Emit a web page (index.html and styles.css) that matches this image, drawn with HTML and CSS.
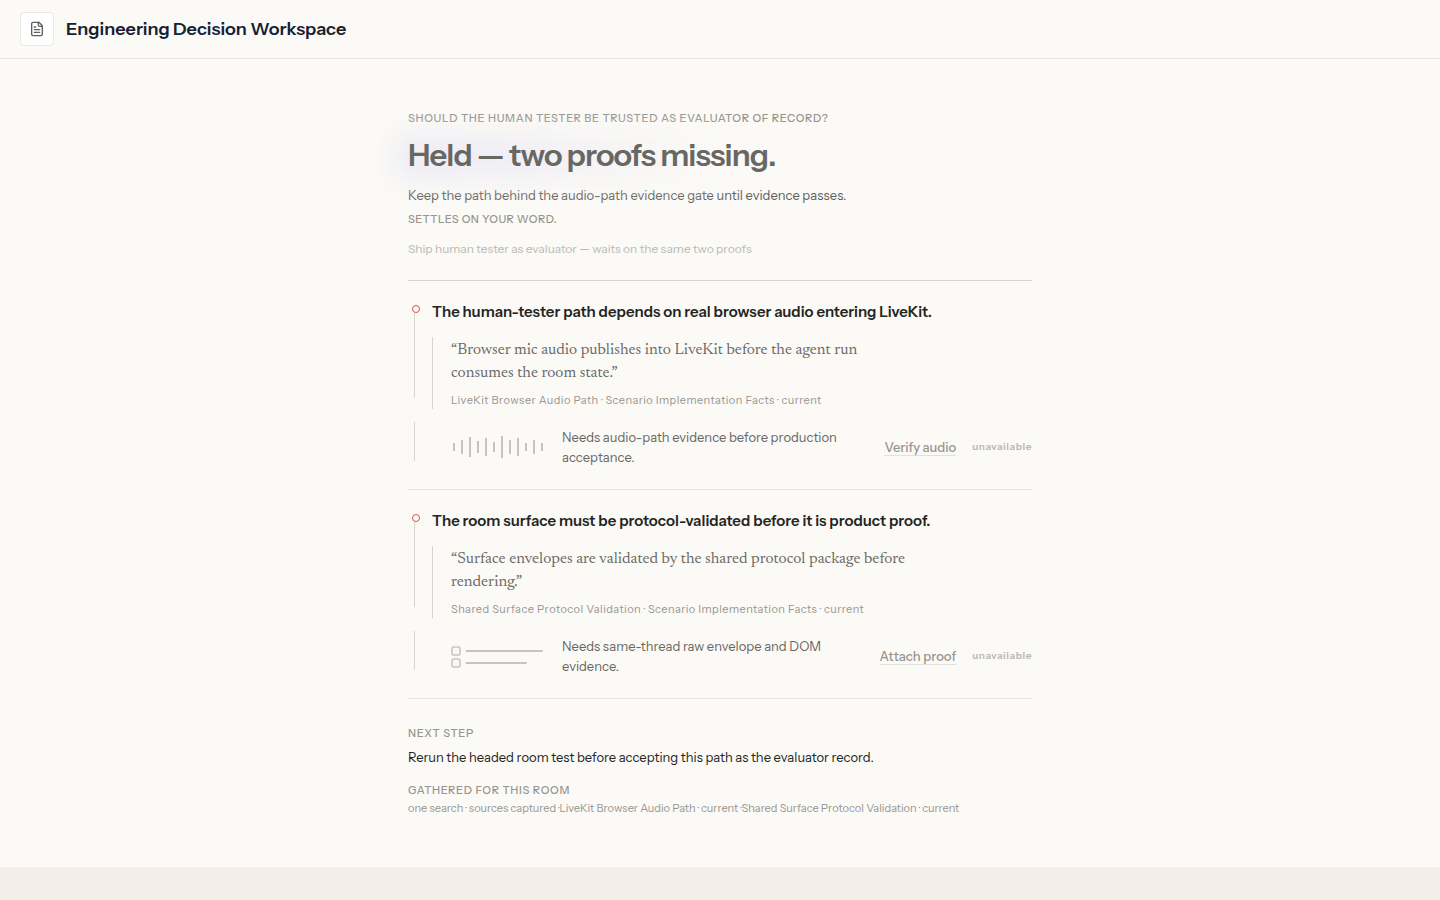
FILE: index.html
```html
<!DOCTYPE html>
<html lang="en">
<head>
<meta charset="utf-8">
<meta name="viewport" content="width=device-width, initial-scale=1">
<title>Engineering Decision Workspace</title>
<link rel="stylesheet" href="styles.css">
</head>
<body>
<div class="panel">
  <header class="topbar">
    <span class="topbar-icon">
      <svg width="16" height="16" viewBox="0 0 24 24" fill="none" stroke="currentColor" stroke-width="2" stroke-linecap="round" stroke-linejoin="round" aria-hidden="true"><path d="M15 2H6a2 2 0 0 0-2 2v16a2 2 0 0 0 2 2h12a2 2 0 0 0 2-2V7Z"/><path d="M14 2v4a2 2 0 0 0 2 2h4"/><path d="M10 9H8"/><path d="M16 13H8"/><path d="M16 17H8"/></svg>
    </span>
    <h1 class="topbar-title">Engineering Decision Workspace</h1>
  </header>
  <main class="content">
    <section class="verdict">
      <p class="label">Should the human tester be trusted as evaluator of record?</p>
      <h2 class="verdict-title">Held — two proofs missing.</h2>
      <p class="verdict-text">Keep the path behind the audio-path evidence gate until evidence passes.</p>
      <p class="label label-small">Settles on your word.</p>
      <p class="verdict-alt">Ship human tester as evaluator — waits on the same two proofs</p>
    </section>

    <article class="proof">
      <div class="rail"><span class="rail-dot"></span><span class="rail-line"></span></div>
      <div class="claim">
        <h3 class="claim-title">The human-tester path depends on real browser audio entering LiveKit.</h3>
        <figure class="quote">
          <blockquote class="quote-text">“Browser mic audio publishes into LiveKit before the agent run consumes the room state.”</blockquote>
          <figcaption class="quote-source">LiveKit Browser Audio Path · Scenario Implementation Facts · current</figcaption>
        </figure>
      </div>
      <div class="rail rail-next"><span class="rail-line"></span></div>
      <div class="need">
        <svg class="need-art" width="95" height="24" viewBox="0 0 95 24" fill="none" stroke="currentColor" stroke-width="2" aria-hidden="true"><path d="M3 8v8M11 5v14M19 2v20M27 6v12M35 3v18M43 7v10M51 1v22M59 5v14M67 3v18M75 8v8M83 5v14M91 8v8"/></svg>
        <p class="need-text">Needs audio-path evidence before production acceptance.</p>
        <button class="need-action" type="button" disabled>Verify audio</button>
        <span class="need-status">unavailable</span>
      </div>
    </article>

    <article class="proof">
      <div class="rail"><span class="rail-dot"></span><span class="rail-line"></span></div>
      <div class="claim">
        <h3 class="claim-title">The room surface must be protocol-validated before it is product proof.</h3>
        <figure class="quote">
          <blockquote class="quote-text">“Surface envelopes are validated by the shared protocol package before rendering.”</blockquote>
          <figcaption class="quote-source">Shared Surface Protocol Validation · Scenario Implementation Facts · current</figcaption>
        </figure>
      </div>
      <div class="rail rail-next"><span class="rail-line"></span></div>
      <div class="need">
        <svg class="need-art" width="95" height="24" viewBox="0 0 95 24" fill="none" stroke="currentColor" stroke-linecap="round" aria-hidden="true"><path stroke-width="2" d="M15.500 7H91M15.500 19H75"/><g stroke-width="1.500"><rect x="1" y="3" width="8" height="8" rx="1.500"/><rect x="1" y="15" width="8" height="8" rx="1.500"/></g></svg>
        <p class="need-text">Needs same-thread raw envelope and DOM evidence.</p>
        <button class="need-action" type="button" disabled>Attach proof</button>
        <span class="need-status">unavailable</span>
      </div>
    </article>

    <section class="closing">
      <h4 class="label">Next step</h4>
      <p class="next-text">Rerun the headed room test before accepting this path as the evaluator record.</p>
      <h4 class="label">Gathered for this room</h4>
      <p class="sources"><span>one search · sources captured ·</span><span>LiveKit Browser Audio Path · current ·</span><span>Shared Surface Protocol Validation · current</span></p>
    </section>
  </main>
</div>
</body>
</html>
```
FILE: styles.css
```css
* { box-sizing: border-box; }

body {
  margin: 0;
  min-height: 100vh;
  background: #f3eee8;
  color: #242421;
  font-family: "Instrument Sans", Inter, "Liberation Sans", sans-serif;
  font-size: 13px;
  line-height: 20px;
}

h1, h2, h3, h4, p, figure, blockquote { margin: 0; }

.panel { background: #fbfaf6; }

.topbar {
  display: flex;
  align-items: center;
  gap: 12px;
  padding: 12px 20px;
  border-bottom: 1px solid #e7e6e3;
}

.topbar-icon {
  display: grid;
  place-items: center;
  width: 34px;
  height: 34px;
  background: #fff;
  border: 1px solid #e9e8e5;
  border-radius: 4px;
  color: #60605c;
}

.topbar-title {
  color: #172033;
  font-size: 18px;
  font-weight: 600;
  line-height: 24px;
}

.content {
  max-width: 624px;
  margin: 0 auto;
  padding: 51px 0;
}

.label {
  color: #969590;
  font-size: 11px;
  font-weight: 500;
  line-height: 16px;
  letter-spacing: 0.06em;
  text-transform: uppercase;
}

.label-small { letter-spacing: 0.04em; }

.verdict {
  padding-bottom: 21px;
  border-bottom: 1px solid #d6d5d1;
}

.verdict-title {
  position: relative;
  z-index: 0;
  margin: 11px 0 12px;
  color: #686764;
  font-size: 31px;
  font-weight: 600;
  line-height: 36px;
  letter-spacing: -0.03em;
}

.verdict-title::before {
  content: "";
  position: absolute;
  z-index: -1;
  inset: -4px 50% -8px -12px;
  background: linear-gradient(90deg, #eeecf4, #f1eff5 40%, #fbfaf6);
  filter: blur(12px);
}

.verdict-text {
  margin-bottom: 6px;
  color: #60605c;
}

.verdict-alt {
  margin-top: 12px;
  color: #b9b8b3;
  font-size: 12px;
}

.proof {
  display: grid;
  grid-template-columns: 24px 1fr;
  row-gap: 13px;
  padding: 20px 0 22px;
  border-bottom: 1px solid #e7e6e3;
}

.rail {
  display: flex;
  flex-direction: column;
  padding: 4px 0 11px 4px;
}

.rail-dot {
  width: 8px;
  height: 8px;
  border: 1px solid #c8633f;
  border-radius: 50%;
}

.rail-line {
  flex: 1;
  width: 1px;
  margin-left: 2px;
  background: #d6d5d1;
}

.rail-next { padding: 0 0 6px 4px; }

.claim-title {
  margin-bottom: 14px;
  font-size: 15px;
  font-weight: 600;
  line-height: 22px;
}

.quote {
  padding: 2px 0 1px 18px;
  border-left: 1px solid #d6d5d1;
}

.quote-text {
  max-width: 464px;
  margin-bottom: 7px;
  color: #686764;
  font-family: Newsreader, "Liberation Serif", serif;
  font-size: 16px;
  line-height: 23px;
}

.quote-source {
  color: #969590;
  font-size: 11px;
  line-height: 16px;
  letter-spacing: 0.04em;
}

.need {
  display: flex;
  align-items: center;
  gap: 16px;
  padding: 5px 0 0 19px;
}

.need-art {
  flex: none;
  color: #c5c4bf;
}

.need-text {
  flex: 1;
  color: #686764;
}

.need-action {
  padding: 2px 0 0;
  border: 0;
  border-bottom: 1px solid #e1e0dc;
  background: none;
  color: #969590;
  font: inherit;
  font-weight: 500;
  line-height: 15px;
}

.need-status {
  color: #b9b8b3;
  font-size: 10px;
  font-weight: 600;
  letter-spacing: 0.06em;
}

.closing { padding-top: 26px; }

.next-text { margin: 6px 0 15px; }

.sources {
  display: flex;
  flex-wrap: wrap;
  margin-top: 2px;
  color: #969590;
  font-size: 11px;
  line-height: 16px;
}
```
